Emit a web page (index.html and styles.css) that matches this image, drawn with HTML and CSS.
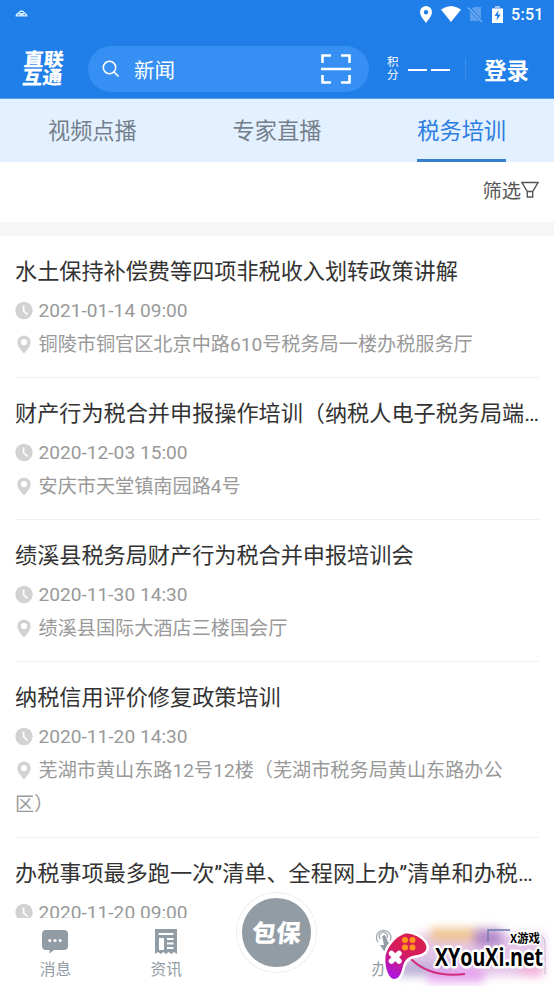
FILE: index.html
```html
<!DOCTYPE html>
<html lang="zh-CN">
<head>
<meta charset="utf-8">
<title>税务培训</title>
<link rel="stylesheet" href="styles.css">
</head>
<body>
<svg class="defs" width="0" height="0" aria-hidden="true">
  <symbol id="clock" viewBox="0 0 18 18"><circle cx="9" cy="9" r="8.7" fill="#d2d2d2"/><path d="M8.6 4v5.3l4 3.7" fill="none" stroke="#fff" stroke-width="1.7"/></symbol>
  <symbol id="pin" viewBox="0 0 18 20"><path fill-rule="evenodd" d="M9 .5a7 7 0 0 0-7 7C2 11.500 6 16 9 19.500c3-3.500 7-8 7-12a7 7 0 0 0-7-7zM9 4.300a3.200 3.200 0 1 1 0 6.400 3.200 3.200 0 0 1 0-6.400z" fill="#d2d2d2"/></symbol>
</svg>
<div class="phone">
  <header class="header">
    <div class="status">
      <svg class="car" width="13" height="8" viewBox="0 0 13 8"><path d="M3 3.500Q6.500-1.500 10 3.500" fill="none" stroke="#d8f0ff" stroke-width="1.300"/><path d="M.5 6.500q0-4 3-3.500h6q3 0 3 3.500z" fill="#cdeaff"/><circle cx="3.700" cy="4.800" r=".7" fill="#237ee8"/><circle cx="9.300" cy="4.800" r=".7" fill="#237ee8"/></svg>
      <div class="status-icons">
        <svg width="12" height="17" viewBox="0 0 12 17"><path fill-rule="evenodd" fill="#fff" d="M6 0a6 6 0 0 0-6 6c0 4 4 8 6 11 2-3 6-7 6-11a6 6 0 0 0-6-6zm0 4a2.200 2.200 0 1 1 0 4.400A2.200 2.200 0 0 1 6 4z"/></svg>
        <svg class="wifi" width="20" height="16" viewBox="0 0 20 16"><path fill="#fff" d="M0 3.500Q10-3.500 20 3.500L10 16z"/></svg>
        <svg class="sim" width="15" height="17" viewBox="0 0 15 17"><path d="M3 3l3-2h7v14H2V5z" fill="#5b9fee"/><path d="M0 1l14 15" stroke="#237ee8" stroke-width="3"/><path d="M0 1.500l14 14.500" stroke="#80b5f3" stroke-width="1.200"/></svg>
        <svg class="battery" width="11" height="17" viewBox="0 0 11 17"><path fill="#9dc6f6" d="M3 0h5v2h3v3H0V2h3z"/><path fill="#fff" d="M0 3h11v14H0z"/><path d="M6.500 4L2.500 10h2.700L4.500 14.500 8.800 8.500H6z" fill="#237ee8"/></svg>
        <span class="time">5:51</span>
      </div>
    </div>
    <div class="nav">
      <div class="logo"><span>直联</span><span>互通</span></div>
      <div class="search">
        <svg width="18" height="18" viewBox="0 0 18 18" fill="none" stroke="#fff" stroke-width="1.600"><circle cx="7.500" cy="7.500" r="6.200"/><path d="M12 12l4.500 4.500"/></svg>
        <span>新闻</span>
        <svg class="scan" width="30" height="30" viewBox="0 0 30 30" fill="none" stroke="#fff" stroke-width="2.600"><path d="M1.500 9V1.500H10M20 1.500h8.500V9M1.500 21v7.500H10M20 28.500h8.500V21M0 15h30"/></svg>
      </div>
      <div class="points"><span>积</span><span>分</span></div>
      <div class="dashes"><i></i><i></i></div>
      <div class="login">登录</div>
    </div>
  </header>
  <nav class="tabs"><span>视频点播</span><span>专家直播</span><span class="active">税务培训</span></nav>
  <div class="filter"><span>筛选</span><svg width="18" height="18" viewBox="0 0 18 18" fill="none" stroke="#555" stroke-width="1.400"><path d="M1 1.500h16L11.700 10.500H6.300zM6.300 10.500v5.500h5.400v-5.500"/></svg></div>
  <main class="list">
    <article><h2>水土保持补偿费等四项非税收入划转政策讲解</h2><p><svg><use href="#clock"/></svg>2021-01-14 09:00</p><p><svg><use href="#pin"/></svg>铜陵市铜官区北京中路610号税务局一楼办税服务厅</p></article>
    <article><h2>财产行为税合并申报操作培训（纳税人电子税务局端）培训</h2><p><svg><use href="#clock"/></svg>2020-12-03 15:00</p><p><svg><use href="#pin"/></svg>安庆市天堂镇南园路4号</p></article>
    <article><h2>绩溪县税务局财产行为税合并申报培训会</h2><p><svg><use href="#clock"/></svg>2020-11-30 14:30</p><p><svg><use href="#pin"/></svg>绩溪县国际大酒店三楼国会厅</p></article>
    <article><h2>纳税信用评价修复政策培训</h2><p><svg><use href="#clock"/></svg>2020-11-20 14:30</p><p><svg><use href="#pin"/></svg>芜湖市黄山东路12号12楼（芜湖市税务局黄山东路办公<br>区）</p></article>
    <article><h2>办税事项最多跑一次”清单、全程网上办”清单和办税事项</h2><p><svg><use href="#clock"/></svg>2020-11-20 09:00</p></article>
  </main>
  <footer class="bottom">
    <div class="item"><svg width="26" height="25" viewBox="0 0 26 25"><path fill="#929ca5" d="M4 1h18a4 4 0 0 1 4 4v12a4 4 0 0 1-4 4H12l-4.500 3.500V21H4a4 4 0 0 1-4-4V5a4 4 0 0 1 4-4z"/><g fill="#fff"><circle cx="7.800" cy="11.500" r="1.600"/><circle cx="13" cy="11.500" r="1.600"/><circle cx="18.200" cy="11.500" r="1.600"/></g></svg><span>消息</span></div>
    <div class="item"><svg width="22" height="25" viewBox="0 0 22 25"><path fill="#929ca5" d="M0 0h22v25l-3-2-2.700 2-2.600-2L11 25l-2.700-2-2.600 2L3 23l-3 2z"/><path d="M3.500 5h15M12 10h6.500M12 14.500h6.500M12 19h6.500" stroke="#fff" stroke-width="2"/><path d="M4 9h5v12H4z" fill="#fff"/></svg><span>资讯</span></div>
    <div class="center"><div class="disc"><span>包保</span></div></div>
    <div class="item service"><svg width="22" height="25" viewBox="0 0 22 25"><path d="M3 13a7.200 7.200 0 1 1 12-1M5.500 10a4 4 0 1 1 6.500-1" fill="none" stroke="#a2aab2" stroke-width="1.400"/><path d="M7 7l3-1 3 7 5 2v7H9l-4-6 4 0z" fill="#929ca5"/></svg><span>办</span></div>
  </footer>
  <div class="watermark">
    <svg width="200" height="76" viewBox="0 0 200 76">
      <defs>
        <linearGradient id="pad" x1=".7" y1="0" x2=".3" y2="1"><stop offset="0" stop-color="#da2049"/><stop offset=".45" stop-color="#d51c5e"/><stop offset="1" stop-color="#ad14e2"/></linearGradient>
        <filter id="soft" x="-30%" y="-60%" width="160%" height="220%"><feGaussianBlur stdDeviation="5"/></filter>
      </defs>
      <g filter="url(#soft)">
        <path d="M62 24h128v42H44z" fill="#e5c6e9"/>
        <path d="M76 18h56v14H76z" fill="#efc48f"/>
        <path d="M120 19h28v18h-28z" fill="#b58aca"/>
        <path d="M44 52h54v14H44z" fill="#b9b0d5"/>
        <path d="M74 58h56v14H74z" fill="#e5a2ee"/>
        <path d="M166 56h22v10h-22z" fill="#f3aad6"/>
      </g>
      <path d="M134 32V20h22" fill="none" stroke="#6a78b0" stroke-width="1.300"/>
      <path d="M182 24q9 1 9 10v30" fill="none" stroke="#c9b5d8"/>
      <path d="M57 49Q76 68 111 64" fill="none" stroke="#d32b7e" stroke-width="2"/>
      <path d="M50 24c6-2 17 3 21 9 4 7-1 11-8 12-8 1-12 4-14 11-2 8-4 13-9 13-7-1-10-17-8-25 2-7 8-16 18-20z" fill="url(#pad)" stroke="#fff" stroke-width="5" stroke-linejoin="round" paint-order="stroke"/>
      <g fill="#ff9619"><circle cx="51" cy="30" r="3"/><circle cx="58.500" cy="30" r="3"/><circle cx="51" cy="37.500" r="3"/><circle cx="58.500" cy="37.500" r="3"/></g>
      <path d="M37.500 43.500l7.500 7.500M45 43.500l-7.500 7.500" stroke="#fff" stroke-width="5.500" stroke-linecap="round"/>
      <text class="wm-small" x="156" y="32.500" textLength="30" lengthAdjust="spacingAndGlyphs">X游戏</text>
      <text class="wm-big" x="81" y="56" textLength="108" lengthAdjust="spacingAndGlyphs">XYouXi.net</text>
    </svg>
  </div>
</div>
</body>
</html>
```
FILE: styles.css
```css
* { box-sizing: border-box; }
body { margin: 0; font-family: Roboto, "Noto Sans CJK SC", sans-serif; background: #fff; }
.defs { position: absolute; }
.phone { position: relative; width: 554px; height: 986px; display: flex; flex-direction: column; overflow: hidden; }
.header { height: 99px; flex: none; background: #207ee8; color: #fff; border-bottom: 1px solid #5ba1ec; }
.status { height: 28px; display: flex; justify-content: space-between; padding: 0 10px 0 15px; }
.car { margin-top: 10px; }
.status-icons { display: flex; align-items: center; }
.wifi { margin-left: 9px; }
.sim { margin-left: 7px; }
.battery { margin-left: 9px; }
.time { font-size: 16px; font-weight: 500; margin-left: 8px; width: 33px; letter-spacing: .3px; line-height: 29px; }
.nav { height: 69px; display: flex; align-items: center; padding: 13px 0 0 23px; }
.logo { width: 40px; margin-right: 25px; display: flex; flex-direction: column; font-size: 20px; line-height: 19px; font-weight: 900; transform: skewX(-5deg) scaleY(.92); white-space: nowrap; }
.search { width: 281px; height: 46px; flex: none; border-radius: 23px; background: #368ff2; display: flex; align-items: center; padding: 0 18px 0 14px; font-size: 20.500px; }
.search span { margin-left: 14px; }
.scan { margin-left: auto; }
.points { display: flex; flex-direction: column; font-size: 11.500px; line-height: 13px; margin-left: 18px; width: 13px; }
.dashes { display: flex; gap: 4px; margin-left: 8px; padding-right: 15px; border-right: 1px solid #3b8dec; height: 22px; align-items: center; }
.dashes i { width: 19px; height: 2px; background: #fff; margin-top: 2px; }
.login { margin-left: 18px; font-size: 22.500px; font-weight: 700; white-space: nowrap; }
.tabs { height: 63px; flex: none; background: #e3f0ff; display: grid; grid-template-columns: repeat(3, 1fr); justify-items: center; font-size: 22.200px; line-height: 65px; color: #747f8b; }
.tabs span { height: 63px; }
.tabs .active { color: #2b7de0; border-bottom: 3px solid #377ecf; }
.filter { height: 74px; flex: none; border-bottom: 14px solid #f6f6f6; display: flex; justify-content: flex-end; align-items: center; padding: 0 15px 5px 0; font-size: 19.300px; color: #555; }
.list { flex: 1; min-height: 0; overflow: hidden; padding: 0 15px; }
article { padding: 20px 0 15.500px; border-bottom: 1px solid #f0f0f0; }
h2 { margin: 0 -3px 7.500px 0; font-size: 22.150px; line-height: 31px; height: 30px; font-weight: 400; color: #333; white-space: nowrap; overflow: hidden; text-overflow: ellipsis; }
p { margin: 0; font-size: 19.150px; line-height: 34px; color: #999; white-space: nowrap; }
p svg { width: 18px; height: 19px; margin-right: 5.500px; vertical-align: -3.500px; }
.bottom { height: 68px; flex: none; background: #fff; display: grid; grid-template-columns: repeat(5, 1fr); }
.item { display: flex; flex-direction: column; align-items: center; padding-top: 11px; font-size: 15.700px; line-height: 22px; color: #929ca5; }
.item span { margin-top: 5px; }
.service { align-items: flex-start; padding-left: 39px; }
.service svg { margin-left: 4px; }
.center { display: flex; justify-content: center; }
.disc { flex: none; width: 79px; height: 79px; margin-top: -25px; border-radius: 50%; background: #929ca5; border: 5px solid #fff; box-shadow: 0 0 0 1px #eee; color: #fff; display: flex; align-items: center; justify-content: center; font-size: 24.500px; font-weight: 900; }
.disc span { transform: skewX(-5deg); margin-top: -3px; }
.watermark { position: absolute; right: 0; bottom: 0; height: 76px; }
.wm-small { font: 700 12px "Noto Sans CJK SC", sans-serif; stroke: #fff; stroke-width: 3px; paint-order: stroke; }
.wm-big { font: 700 25px "Open Sans", sans-serif; stroke: #fff; stroke-width: 5px; paint-order: stroke; stroke-linejoin: round; }
```
